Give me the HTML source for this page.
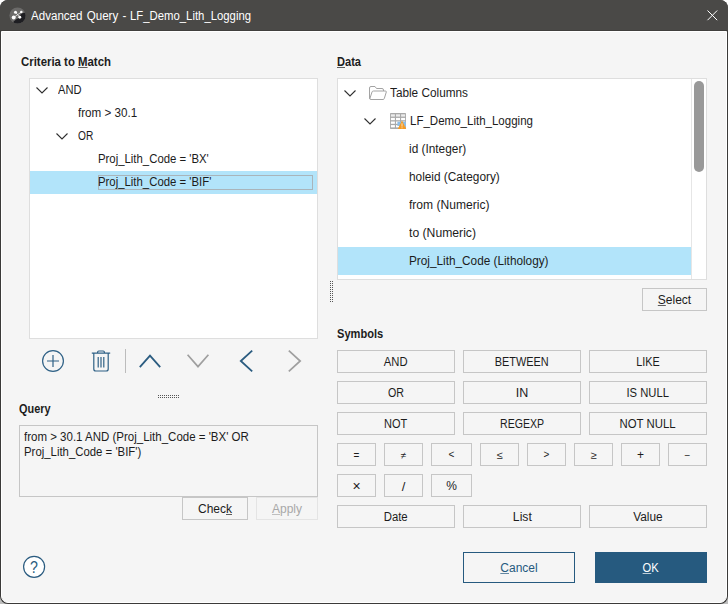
<!DOCTYPE html>
<html><head><meta charset="utf-8"><title>Advanced Query</title>
<style>
*{box-sizing:border-box;margin:0;padding:0}
html,body{width:728px;height:604px;overflow:hidden;background:#fff}
body{font-family:"Liberation Sans",sans-serif;font-size:12px;color:#1c1c1c;position:relative}
.abs{position:absolute}
#cornerbg{left:0;top:300px;width:728px;height:304px;background:#bdbdbd}
#win{left:0;top:0;width:728px;height:604px;background:#3b3a39;border-radius:8px;overflow:hidden}
#inner{left:1px;top:31px;width:726px;height:572px;background:#f5f5f5;border:1px solid #fff;border-radius:0 0 7px 7px}
#title{left:0;top:0;width:728px;height:31px;background:#4a4947;border-bottom:1px solid #403f3d}
#title span{position:absolute;left:31px;top:9px;line-height:14px;color:#fff;font-size:12px;white-space:nowrap}
.t{position:absolute;white-space:nowrap;font-size:12px;line-height:14px;display:inline-block;transform-origin:0 50%}
.lbl{font-weight:bold}
.box{background:#fff;border:1px solid #dedede}
.sel{position:absolute;background:#b2e4fa}
.btn{position:absolute;height:23px;padding-top:1px;border:1px solid #c6c6c6;background:#f5f5f5;text-align:center;line-height:21px;font-size:12px;white-space:nowrap}
.btn span{display:inline-block}
u{text-decoration:underline;text-underline-offset:1px;text-decoration-thickness:1px;text-decoration-color:color-mix(in srgb,currentColor 70%,transparent)}
svg{position:absolute;overflow:visible}
</style></head><body>
<div id="cornerbg" class="abs"></div>
<div id="win" class="abs">
<div id="title" class="abs"><span id="ttl" style="display:inline-block;transform-origin:0 50%;transform:scaleX(0.965);word-spacing:1px">Advanced Query - </span><span id="ttl2" style="left:130.4px;display:inline-block;transform-origin:0 50%;transform:scaleX(0.945)">LF_Demo_Lith_Logging</span></div>
<div id="inner" class="abs"></div>
<div id="content" class="abs" style="left:0;top:0;width:728px;height:604px">

<!-- title icons -->
<svg style="left:8.6px;top:6.9px" width="17" height="17" viewBox="0 0 17 17">
  <defs><clipPath id="cc"><circle cx="8.5" cy="8.5" r="8.1"/></clipPath></defs>
  <circle cx="8.5" cy="8.5" r="8.1" fill="#6b6a69"/>
  <path d="M17 5.6 L12.3 6.6 L9.6 11 L7 12.6 L4.6 14.6 L4 17 L17 17 Z" fill="#1e1e22" clip-path="url(#cc)"/>
  <path d="M4.6 10.5 L12.3 5.1 M6.5 5.3 L10.8 10.1" stroke="#fff" stroke-width="0.8" stroke-opacity="0.85" fill="none"/>
  <circle cx="4.7" cy="10.5" r="1.95" fill="#fff"/><circle cx="6.5" cy="5.3" r="1.5" fill="#fff"/>
  <circle cx="12.3" cy="5.1" r="1.25" fill="#fff"/><circle cx="10.8" cy="10.2" r="1.45" fill="#fff"/>
</svg>
<svg style="left:706.6px;top:10px" width="11" height="11" viewBox="0 0 11 11"><path d="M0.5 0.5 L10.2 10.2 M10.2 0.5 L0.5 10.2" stroke="#fff" stroke-width="1" fill="none"/></svg>

<!-- left: criteria -->
<div class="t lbl" id="l_crit" style="transform:scaleX(0.950);left:21px;top:55px">Criteria to <u>M</u>atch</div>
<div class="abs box" style="left:29px;top:78px;width:289px;height:261px"></div>
<div class="sel" style="left:30px;top:171px;width:287px;height:23px"></div>
<div class="abs" style="left:98px;top:175px;width:215px;height:15px;border:1px solid #a9b4ba"></div>
<svg style="left:36px;top:87px" width="12" height="7" viewBox="0 0 12 7"><path d="M0.5 0.5 L6 6 L11.5 0.5" stroke="#303030" stroke-width="1.1" fill="none"/></svg>
<svg style="left:56px;top:133px" width="12" height="7" viewBox="0 0 12 7"><path d="M0.5 0.5 L6 6 L11.5 0.5" stroke="#303030" stroke-width="1.1" fill="none"/></svg>
<div class="t" id="t_and" style="transform:scaleX(0.929);left:58px;top:83px">AND</div>
<div class="t" id="t_from" style="transform:scaleX(0.971);left:78px;top:106px">from &gt; 30.1</div>
<div class="t" id="t_or" style="transform:scaleX(0.847);left:78px;top:129px">OR</div>
<div class="t" id="t_bx" style="transform:scaleX(0.947);left:98.4px;top:152px">Proj_Lith_Code = 'BX'</div>
<div class="t" id="t_bif" style="transform:scaleX(0.947);left:98.4px;top:175px">Proj_Lith_Code = 'BIF'</div>

<!-- icon row -->
<svg style="left:41px;top:349px" width="24" height="24" viewBox="0 0 24 24"><circle cx="12" cy="12" r="10.4" stroke="#2f6186" stroke-width="1.2" fill="none"/><path d="M12 6 V18 M6 12 H18" stroke="#2f6186" stroke-width="1.2" fill="none"/></svg>
<svg style="left:91px;top:349px" width="20" height="24" viewBox="0 0 20 24"><path d="M0.8 4.2 H19.2 M6.6 4.2 V3.2 Q6.6 2 7.8 2 H12.2 Q13.4 2 13.4 3.2 V4.2 M2.8 4.2 V20 Q2.8 22 4.8 22 H15.2 Q17.2 22 17.2 20 V4.2 M7.2 8 V18.5 M10 8 V18.5 M12.8 8 V18.5" stroke="#2f6186" stroke-width="1.2" fill="none"/></svg>
<div class="abs" style="left:125px;top:349px;width:1px;height:24px;background:#bcbcbc"></div>
<svg style="left:139px;top:354px" width="22" height="14" viewBox="0 0 22 14"><path d="M0.8 13.2 L11 1.6 L21.2 13.2" stroke="#2b5c80" stroke-width="1.8" fill="none"/></svg>
<svg style="left:187px;top:354px" width="22" height="14" viewBox="0 0 22 14"><path d="M0.6 0.8 L11 12.6 L21.4 0.8" stroke="#9f9f9f" stroke-width="1.7" fill="none"/></svg>
<svg style="left:239px;top:350px" width="14" height="22" viewBox="0 0 14 22"><path d="M13.2 0.6 L1.8 11 L13.2 21.4" stroke="#2b5c80" stroke-width="1.8" fill="none"/></svg>
<svg style="left:287.5px;top:350px" width="14" height="22" viewBox="0 0 14 22"><path d="M0.8 0.6 L12.2 11 L0.8 21.4" stroke="#9f9f9f" stroke-width="1.7" fill="none"/></svg>

<!-- splitters -->
<div class="abs" style="left:158px;top:395px;width:22px;height:3px;background-image:radial-gradient(circle at 0.5px 0.5px,#555 0.6px,transparent 0.7px);background-size:2px 2px"></div>
<div class="abs" style="left:330px;top:281px;width:3px;height:22px;background-image:radial-gradient(circle at 0.5px 0.5px,#555 0.6px,transparent 0.7px);background-size:2px 2px"></div>

<!-- query -->
<div class="t lbl" id="l_query" style="transform:scaleX(0.908);left:19px;top:402px">Query</div>
<div class="abs" style="left:19px;top:425px;width:299px;height:72px;border:1px solid #c6c6c6"></div>
<div class="t" id="q1" style="transform:scaleX(0.958);left:24px;top:430px">from &gt; 30.1 AND (Proj_Lith_Code = 'BX' OR</div>
<div class="t" id="q2" style="transform:scaleX(0.948);left:24px;top:445px">Proj_Lith_Code = 'BIF')</div>
<div class="btn" style="left:182px;top:497px;width:66px"><span id="b_check">Chec<u>k</u></span></div>
<div class="btn" style="left:256px;top:497px;width:62px;color:#a8a8a8;border-color:#e4e4e4"><span id="b_apply"><u>A</u>pply</span></div>

<!-- help -->
<svg style="left:23px;top:556px" width="22" height="22" viewBox="0 0 22 22"><circle cx="11.1" cy="10.8" r="10.5" stroke="#2b5c80" stroke-width="1.2" fill="#fff"/><text id="t_help" transform="translate(10.9 17) scale(0.86 1)" text-anchor="middle" font-family="Liberation Sans, sans-serif" font-size="16.5" fill="#2b5c80">?</text></svg>

<!-- right: data -->
<div class="t lbl" id="l_data" style="transform:scaleX(0.923);left:337px;top:55px"><u>D</u>ata</div>
<div class="abs box" style="left:337px;top:78px;width:370px;height:202px"></div>
<div class="abs" style="left:691px;top:79px;width:1px;height:200px;background:#e6e6e6"></div>
<div class="abs" style="left:694px;top:81px;width:10px;height:91px;border-radius:5px;background:#999"></div>
<div class="sel" style="left:338px;top:247px;width:353px;height:28px"></div>
<svg style="left:344px;top:90px" width="12" height="7" viewBox="0 0 12 7"><path d="M0.5 0.5 L6 6 L11.5 0.5" stroke="#303030" stroke-width="1.1" fill="none"/></svg>
<svg style="left:364px;top:118px" width="12" height="7" viewBox="0 0 12 7"><path d="M0.5 0.5 L6 6 L11.5 0.5" stroke="#303030" stroke-width="1.1" fill="none"/></svg>
<!-- folder -->
<svg style="left:369px;top:86px" width="18" height="14" viewBox="0 0 18 14"><path d="M0.5 12 V2 Q0.5 0.5 2 0.5 H6 L7.5 2.5 H13 Q14.5 2.5 14.5 4 V5 M0.5 12 Q0.5 13.5 2 13.5 H14 Q15 13.5 15.3 12.5 L17.3 6 Q17.5 5 16.3 5 H4.5 Q3.3 5 3 6 L0.8 12.8" stroke="#a3a3a3" stroke-width="1" fill="#fff"/></svg>
<!-- table icon -->
<svg style="left:390px;top:113px" width="16" height="16" viewBox="0 0 16 16">
  <rect x="0" y="0" width="16" height="16" rx="0.8" fill="#a9a9a9"/>
  <rect x="0.9" y="1.3" width="4" height="2.3" fill="#ececec"/><rect x="6" y="1.3" width="4" height="2.3" fill="#ececec"/><rect x="11.1" y="1.3" width="4" height="2.3" fill="#ececec"/><rect x="0.9" y="4.9" width="4" height="2.3" fill="#fff"/><rect x="6" y="4.9" width="4" height="2.3" fill="#fff"/><rect x="11.1" y="4.9" width="4" height="2.3" fill="#fff"/><rect x="0.9" y="8.5" width="4" height="2.3" fill="#fff"/><rect x="6" y="8.5" width="4" height="2.3" fill="#fff"/><rect x="11.1" y="8.5" width="4" height="2.3" fill="#fff"/><rect x="0.9" y="12.1" width="4" height="2.3" fill="#fff"/><rect x="6" y="12.1" width="4" height="2.3" fill="#fff"/><rect x="11.1" y="12.1" width="4" height="2.3" fill="#fff"/>
  <rect x="7.4" y="8.8" width="8.6" height="4.2" fill="#8dbde6"/>
  <path d="M12 7.6 L16.2 16 H7.8 Z" fill="#f59a23"/>
  <path d="M12 10.3 V13.6 M12 14.3 V15.3" stroke="#fde8c8" stroke-width="0.9"/>
</svg>
<div class="t" id="d_tc" style="transform:scaleX(0.982);left:390px;top:86px">Table Columns</div>
<div class="t" id="d_lf" style="transform:scaleX(0.960);left:410px;top:114px">LF_Demo_Lith_Logging</div>
<div class="t" id="d_id" style="transform:scaleX(0.987);left:409px;top:142px">id (Integer)</div>
<div class="t" id="d_hole" style="transform:scaleX(0.986);left:409px;top:170px">holeid (Category)</div>
<div class="t" id="d_from" style="transform:scaleX(1.006);left:409px;top:198px">from (Numeric)</div>
<div class="t" id="d_to" style="transform:scaleX(1.015);left:409px;top:226px">to (Numeric)</div>
<div class="t" id="d_proj" style="transform:scaleX(0.982);left:409px;top:254px">Proj_Lith_Code (Lithology)</div>
<div class="btn" style="left:642px;top:288px;width:65px"><span id="b_select"><u>S</u>elect</span></div>

<!-- symbols -->
<div class="t lbl" id="l_sym" style="transform:scaleX(0.925);left:337px;top:327px">Symbols</div>
<div class="btn" style="left:337px;top:350px;width:118px"><span id="sb_AND" style="transform:scaleX(0.937)">AND</span></div>
<div class="btn" style="left:463px;top:350px;width:118px"><span id="sb_BETWEEN" style="transform:scaleX(0.910)">BETWEEN</span></div>
<div class="btn" style="left:589px;top:350px;width:118px"><span id="sb_LIKE" style="transform:scaleX(0.903)">LIKE</span></div>
<div class="btn" style="left:337px;top:381px;width:118px"><span id="sb_OR" style="transform:scaleX(0.889)">OR</span></div>
<div class="btn" style="left:463px;top:381px;width:118px"><span id="sb_IN" style="transform:scaleX(1.042)">IN</span></div>
<div class="btn" style="left:589px;top:381px;width:118px"><span id="sb_IS_NULL" style="transform:scaleX(0.937)">IS NULL</span></div>
<div class="btn" style="left:337px;top:412px;width:118px"><span id="sb_NOT" style="transform:scaleX(0.917)">NOT</span></div>
<div class="btn" style="left:463px;top:412px;width:118px"><span id="sb_REGEXP" style="transform:scaleX(0.880)">REGEXP</span></div>
<div class="btn" style="left:589px;top:412px;width:118px"><span id="sb_NOT_NULL" style="transform:scaleX(0.947)">NOT NULL</span></div>
<div class="btn sm" style="left:337px;top:443px;width:39px;font-size:10px">=</div>
<div class="btn sm" style="left:384px;top:443px;width:39px;font-size:10px">≠</div>
<div class="btn sm" style="left:431px;top:443px;width:41px;font-size:10px;line-height:19px">&lt;</div>
<div class="btn sm" style="left:480px;top:443px;width:39px;font-size:11px">≤</div>
<div class="btn sm" style="left:527px;top:443px;width:39px;font-size:10px;line-height:19px">&gt;</div>
<div class="btn sm" style="left:574px;top:443px;width:39px;font-size:11px">≥</div>
<div class="btn sm" style="left:621px;top:443px;width:39px">+</div>
<div class="btn sm" style="left:668px;top:443px;width:39px;font-size:10px">−</div>
<div class="btn sm" style="left:337px;top:474px;width:39px;font-size:14px">×</div>
<div class="btn sm" style="left:384px;top:474px;width:39px;font-size:13px">/</div>
<div class="btn sm" style="left:431px;top:474px;width:41px">%</div>
<div class="btn" style="left:337px;top:505px;width:118px"><span id="sb_Date" style="transform:scaleX(0.946)">Date</span></div>
<div class="btn" style="left:463px;top:505px;width:118px"><span id="sb_List" style="transform:scaleX(1.017)">List</span></div>
<div class="btn" style="left:589px;top:505px;width:118px"><span id="sb_Value" style="transform:scaleX(0.990)">Value</span></div>

<div class="btn" style="left:463px;top:552px;width:112px;height:31px;line-height:29px;border-color:#265a7f;color:#265a7f"><span id="b_cancel"><u>C</u>ancel</span></div>
<div class="btn" style="left:595px;top:552px;width:112px;height:31px;line-height:29px;border-color:#265a7f;background:#265a7f;color:#fff"><span id="b_ok" style="transform:scaleX(0.93)"><u>O</u>K</span></div>
</div>
</div>
</body></html>
